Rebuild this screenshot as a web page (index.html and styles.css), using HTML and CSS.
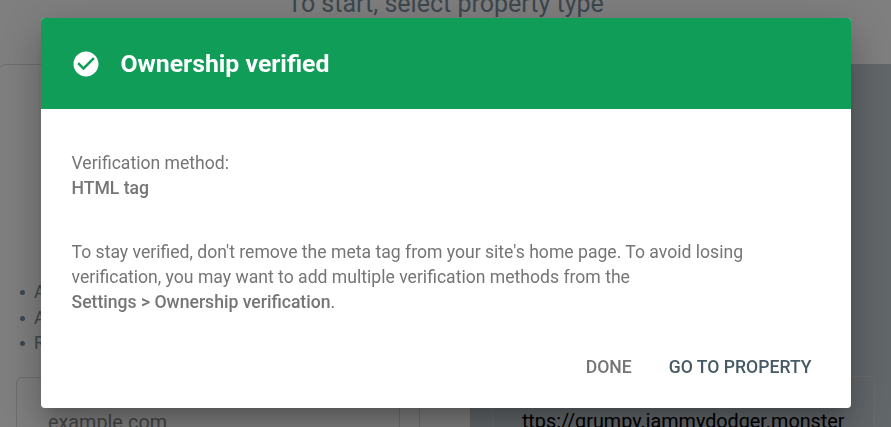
FILE: index.html
```html
<!DOCTYPE html>
<html lang="en">
<head>
  <meta charset="UTF-8">
  <title>Search Console</title>
  <link rel="stylesheet" href="styles.css">
</head>
<body>
  <div class="page">
    <h1 class="page-title">To start, select property type</h1>
    <div class="columns">
      <div class="card">
        <ul class="card-list">
          <li>All URLs across all subdomains</li>
          <li>All URLs across https or http</li>
          <li>Requires DNS verification</li>
        </ul>
        <div class="field"><span class="placeholder">example.com</span></div>
      </div>
      <div class="card card-active">
        <div class="field"><div class="url-clip"><span class="url">https://grumpy.jammydodger.monster</span></div></div>
      </div>
    </div>
  </div>

  <div class="overlay">
    <div class="dialog">
      <div class="dialog-header">
        <svg class="check-icon" viewBox="0 0 24 24" width="30" height="30">
          <path fill="#fff" d="M12 2C6.48 2 2 6.48 2 12s4.48 10 10 10 10-4.48 10-10S17.52 2 12 2zm-2 15l-5-5 1.41-1.41L10 14.17l7.59-7.59L19 8l-9 9z"/>
        </svg>
        <h2>Ownership verified</h2>
      </div>
      <div class="dialog-body">
        <div class="method">
          <div>Verification method:</div>
          <b>HTML tag</b>
        </div>
        <p class="note">To stay verified, don't remove the meta tag from your site's home page. To avoid losing verification, you may want to add multiple verification methods from the<br><b>Settings &gt; Ownership verification</b>.</p>
      </div>
      <div class="dialog-actions">
        <button class="btn">DONE</button>
        <button class="btn btn-primary">GO TO PROPERTY</button>
      </div>
    </div>
  </div>
</body>
</html>
```

FILE: styles.css
```css
html, body {
    height: 100%;
}
body {
    margin: 0;
    overflow: hidden;
    background-color: #fff;
    font-family: Roboto, "Liberation Sans", sans-serif;
}
.page {
    height: 427px;
    overflow: hidden;
}
.page-title {
    margin: 0;
    height: 53px;
    margin-top: -11px;
    font-size: 25px;
    font-weight: 400;
    line-height: 30px;
    text-align: center;
    color: #7a8f9c;
}
.columns {
    display: grid;
    grid-template-columns: 422px 1fr;
    column-gap: 50px;
    margin: 22px 0 0 -2px;
    height: 400px;
}
.card {
    box-sizing: border-box;
    border: 1px solid #dadce0;
    border-radius: 8px;
    padding: 311px 19px 0 17px;
}
.card-active {
    background-color: #c5ced4;
    border-color: #c5ced4;
    border-radius: 8px 0 0 8px;
    border-right: none;
    padding: 311px 16px 0 21px;
}
.card-list {
    margin: -96px 0 20px;
    padding: 0;
    list-style: none;
    font-size: 17.6px;
    line-height: 25.5px;
    color: #7a8f9c;
}
.card-list li::before {
    content: "";
    display: inline-block;
    width: 5px;
    height: 5px;
    margin: 0 9px 3px 4px;
    border-radius: 50%;
    background-color: #7a8f9c;
}
.field {
    box-sizing: border-box;
    height: 80px;
    border: 1px solid #dadce0;
    border-radius: 6px;
    padding: 33px 0 0 31px;
    font-size: 19.8px;
    overflow: hidden;
    white-space: nowrap;
}
.card-active .field {
    border-color: #d3dade;
    padding-left: 28px;
}
.url-clip {
    overflow: hidden;
}
.placeholder {
    color: #8a8a8a;
}
.url {
    display: block;
    margin-left: -10px;
    color: #000;
}
.overlay {
    position: fixed;
    top: 0;
    left: 0;
    right: 0;
    bottom: 0;
    display: flex;
    justify-content: center;
    align-items: flex-start;
    padding-top: 18px;
    background-color: rgba(0, 0, 0, 0.5);
}
.dialog {
    width: 810px;
    height: 390px;
    display: flex;
    flex-direction: column;
    background-color: #fff;
    border-radius: 4px;
    overflow: hidden;
    box-shadow: 0 11px 15px -7px rgba(0, 0, 0, 0.2), 0 24px 38px 3px rgba(0, 0, 0, 0.14), 0 9px 46px 8px rgba(0, 0, 0, 0.12);
}
.dialog-header {
    height: 91px;
    display: flex;
    align-items: center;
    gap: 20px;
    padding-left: 30px;
    background-color: #0f9d58;
    color: #fff;
}
.dialog-header h2 {
    margin: 0;
    font-size: 24.8px;
    font-weight: 700;
}
.check-icon {
    flex-shrink: 0;
}
.dialog-body {
    flex: 1;
    padding: 42px 31px 0;
    font-size: 17.6px;
    line-height: 25px;
    color: #757575;
}
.dialog-body b {
    font-weight: 500;
}
.note {
    margin: 39px 0 0;
}
.dialog-actions {
    display: flex;
    justify-content: flex-end;
    gap: 37px;
    padding: 0 39px 31px;
}
.btn {
    padding: 0;
    border: none;
    background: none;
    font-family: inherit;
    font-size: 17.6px;
    font-weight: 500;
    line-height: 19px;
    color: #757575;
    cursor: pointer;
}
.btn-primary {
    color: #455a64;
}
```
